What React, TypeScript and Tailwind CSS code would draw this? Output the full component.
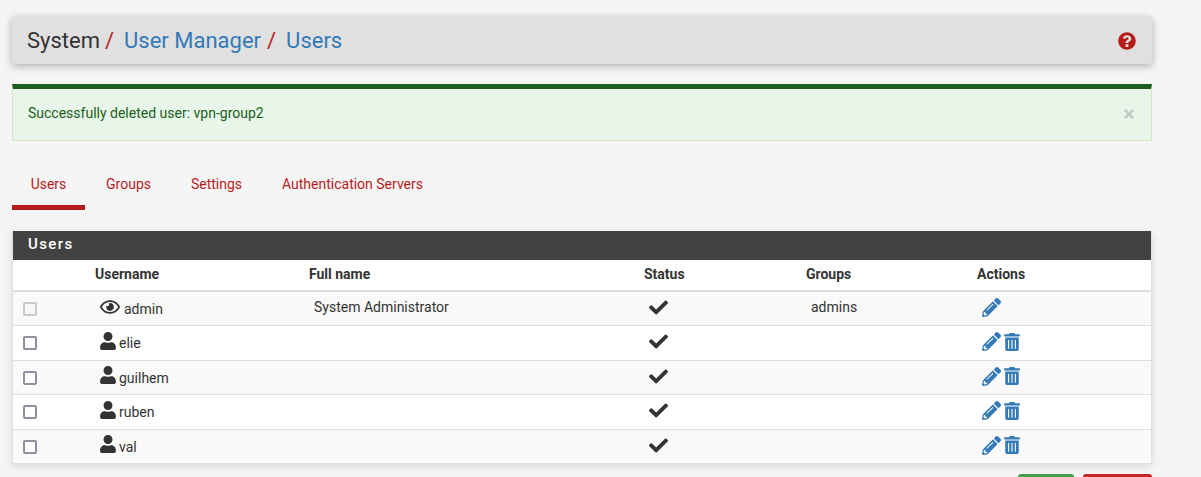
import React from "react";
import { FaCheck, FaPencilAlt, FaQuestionCircle, FaRegEye, FaTimes, FaTrashAlt, FaUser } from "react-icons/fa";

const rows = [
  { name: "admin", full: "System Administrator", group: "admins", admin: true },
  { name: "elie" },
  { name: "guilhem" },
  { name: "ruben" },
  { name: "val" },
] as { name: string; full?: string; group?: string; admin?: boolean }[];

const heights = ["h-[34px]", "h-[35px]", "h-[34px]", "h-[35px]", "h-[34px]"];

export default function App() {
  return (
    <div className="h-[477px] overflow-hidden bg-[#f5f5f5] px-3 pt-[17px] font-['Roboto',sans-serif] text-[14px] text-[#333]">
      <div className="w-[1140px]">
        <div className="flex h-[47px] items-center justify-between rounded-[3px] bg-[#e0e0e0] pl-[15px] pr-[15px] text-[22px] shadow-[0_2px_8px_rgba(0,0,0,0.3)]">
          <div className="flex items-center whitespace-pre">
            <span>System</span>
            <span className="ml-[5px] text-[#b71c1c]">/</span>
            <span className="ml-[10px] text-[#337ab7]">User Manager</span>
            <span className="ml-[6px] text-[#b71c1c]">/</span>
            <span className="ml-[10px] text-[#337ab7]">Users</span>
          </div>
          <FaQuestionCircle className="mr-[1px] text-[18px] text-[#b71c1c]" />
        </div>

        <div className="mt-5 flex h-[57px] items-center justify-between border border-t-[5px] border-[#d6e9c6] border-t-[#1b5e20] bg-[#e8f5e9] pl-[15px] pr-[15px] text-[#1b5e20]">
          <span className="relative -top-[1px]">Successfully deleted user: vpn-group2</span>
          <FaTimes className="relative -top-[1px] text-[14px] text-[#c4cbc5]" />
        </div>

        <nav className="mt-[23px] flex h-[46px] text-[#b71c1c]">
          <a className="flex h-[46px] w-[73px] items-center justify-center border-b-[5px] border-[#b71c1c] pb-[1px]">Users</a>
          <a className="flex h-[46px] w-[86px] items-center justify-center pb-[6px] pl-[1px]">Groups</a>
          <a className="flex h-[46px] w-[91px] items-center justify-center pb-[6px]">Settings</a>
          <a className="flex h-[46px] w-[181px] items-center justify-center pb-[6px]">Authentication Servers</a>
        </nav>

        <section className="mt-[21px] border-x border-b border-[#e0e0e0] bg-white shadow-[0_2px_8px_rgba(0,0,0,0.12)]">
          <h2 className="flex h-[29px] items-center bg-[#424242] pb-[2px] pl-[15px] text-[15px] font-medium tracking-[1.4px] text-white">Users</h2>
          <table className="w-full table-fixed border-collapse">
            <colgroup>
              <col className="w-[77px]" />
              <col className="w-[214px]" />
              <col className="w-[335px]" />
              <col className="w-[162px]" />
              <col className="w-[171px]" />
              <col />
            </colgroup>
            <thead>
              <tr className="h-[31px] border-b-2 border-[#ddd] text-left font-bold">
                <th />
                <th className="pb-[2px] pl-[5px] font-bold">Username</th>
                <th className="pb-[2px] pl-[5px] font-bold">Full name</th>
                <th className="pb-[2px] pl-[5px] font-bold">Status</th>
                <th className="pb-[2px] pl-[5px] font-bold">Groups</th>
                <th className="pb-[2px] pl-[5px] font-bold">Actions</th>
              </tr>
            </thead>
            <tbody>
              {rows.map((r, i) => (
                <tr key={r.name} className={`${heights[i]} ${i < 4 ? "border-b" : ""} border-[#ddd] ${i % 2 === 0 ? "bg-[#f9f9f9]" : "bg-white"}`}>
                  <td className="pl-[10px]">
                    <span className={`relative block size-[14px] rounded-[2px] border-2 ${i % 2 === 0 ? "top-[1px]" : "top-0"} ${r.admin ? "border-[#c9c9ce] bg-[#f7f7f7]" : "border-[#8f8f9d] bg-white"}`} />
                  </td>
                  <td className="pl-[5px]">
                    <div className="flex items-center">
                      {r.admin ? (
                        <FaRegEye className="relative -top-[1px] ml-[5px] mr-[4px] text-[20px]" />
                      ) : (
                        <FaUser className="relative -top-[2px] ml-[4px] mr-[2px] text-[18px]" />
                      )}
                      <span className="relative top-[1px]">{r.name}</span>
                    </div>
                  </td>
                  <td className="pl-[10px]"><span className="relative -top-[1px]">{r.full}</span></td>
                  <td className="pl-[10px]"><FaCheck className="relative -top-[1px] text-[19px]" /></td>
                  <td className="pl-[10px]"><span className="relative -top-[1px]">{r.group}</span></td>
                  <td className="pl-[10px]">
                    <div className="relative -top-[1px] flex items-center text-[#337ab7]">
                      <FaPencilAlt className="text-[19px]" />
                      {!r.admin && <FaTrashAlt className="ml-[2px] text-[18px]" />}
                    </div>
                  </td>
                </tr>
              ))}
            </tbody>
          </table>
        </section>

        <div className="mt-[10px] flex justify-end gap-[9px]">
          <div className="h-8 w-[56px] rounded-[3px] bg-[#43a047]" />
          <div className="h-8 w-[69px] rounded-[3px] bg-[#c62828]" />
        </div>
      </div>
    </div>
  );
}
